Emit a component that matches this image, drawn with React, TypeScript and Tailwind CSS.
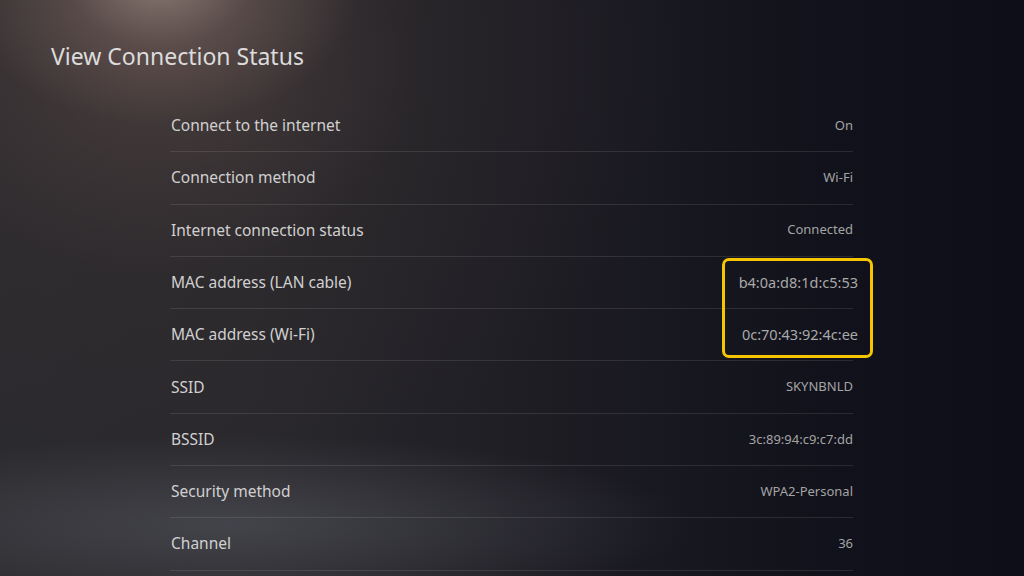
import React from 'react';

type Row = {
  label: string;
  value: string;
  mac?: boolean;
};

const rows: Row[] = [
  { label: 'Connect to the internet', value: 'On' },
  { label: 'Connection method', value: 'Wi-Fi' },
  { label: 'Internet connection status', value: 'Connected' },
  { label: 'MAC address (LAN cable)', value: 'b4:0a:d8:1d:c5:53', mac: true },
  { label: 'MAC address (Wi-Fi)', value: '0c:70:43:92:4c:ee', mac: true },
  { label: 'SSID', value: 'SKYNBNLD' },
  { label: 'BSSID', value: '3c:89:94:c9:c7:dd' },
  { label: 'Security method', value: 'WPA2-Personal' },
  { label: 'Channel', value: '36' },
];

export default function App() {
  return (
    <div className="relative h-[576px] w-[1024px] overflow-hidden bg-[#101119] font-['Noto_Sans',sans-serif]">
      {/* background: cool dark to the right, warm spotlight top-left */}
      <div className="absolute inset-0 bg-[linear-gradient(90deg,#2b2a2e_0%,#29282c_25%,#1d1c23_55%,#11121b_80%,#0d0e18_100%)]" />
      <div className="absolute inset-0 bg-[radial-gradient(ellipse_200px_140px_at_160px_-15px,rgba(205,185,175,0.8)_0%,rgba(140,118,110,0.45)_45%,rgba(80,65,62,0)_100%)]" />
      <div className="absolute inset-0 bg-[radial-gradient(ellipse_520px_420px_at_160px_60px,rgba(95,76,72,0.55)_0%,rgba(60,50,50,0.25)_50%,rgba(40,35,38,0)_100%)]" />
      <div className="absolute inset-0 bg-[radial-gradient(ellipse_460px_90px_at_230px_525px,rgba(84,86,94,0.6)_0%,rgba(60,62,70,0)_100%)]" />

      <div className="relative flex flex-col">
        <h1 className="pl-[51px] pt-[40px] text-[23px] leading-[32px] text-[#dcdcdc]">View Connection Status</h1>

        <div className="relative ml-[170px] mt-[28px] w-[683px]">
          {rows.map((row) => (
            <div
              key={row.label}
              className="flex h-[52.3px] items-center justify-between border-b border-white/10 pl-px"
            >
              <span className="text-[15.5px] text-[#d0d0d0]">{row.label}</span>
              {row.mac ? (
                <span className="mr-[-5px] text-[14.5px] text-[#a9a9a9]">{row.value}</span>
              ) : (
                <span className="text-[13px] text-[#a4a4a4]">{row.value}</span>
              )}
            </div>
          ))}

          <div className="absolute left-[552px] top-[158px] h-[100px] w-[151px] rounded-[7px] border-[3px] border-[#f6c500]" />
        </div>
      </div>
    </div>
  );
}
